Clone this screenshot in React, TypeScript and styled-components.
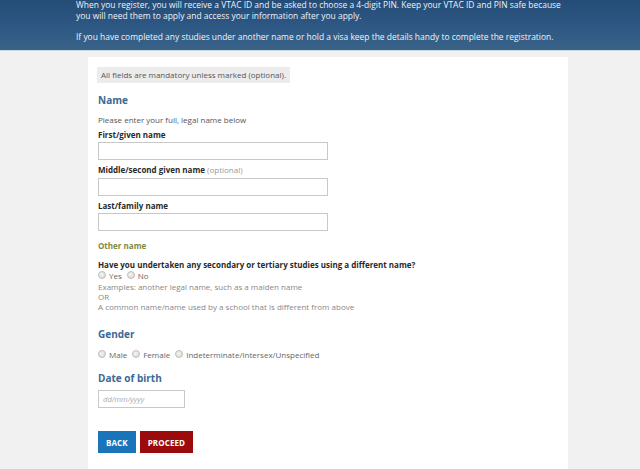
import React from 'react'
import styled, { createGlobalStyle } from 'styled-components'

const GlobalStyle = createGlobalStyle`
    html, body {
        margin: 0;
        padding: 0;
        background: #f1f1f1;
        font-family: 'Open Sans', 'DejaVu Sans', sans-serif;
        color: #333;
    }
`

const Banner = styled.div`
    height: 51px;
    box-sizing: border-box;
    padding: 0 76px;
    background: linear-gradient(180deg, #244c77 0%, #2f5a85 60%, #3a6288 100%);
    border-bottom: 1px solid #c9dbe6;
    color: #eef3f8;
    font-size: 8.45px;
    line-height: 10.5px;
    overflow: hidden;

    p {
        margin: 0 0 11px;
    }
`

const Page = styled.div`
    padding-top: 6px;
    padding-left: 88px;
`

const Panel = styled.div`
    width: 480px;
    min-height: 420px;
    box-sizing: border-box;
    background: #fff;
    padding: 10px 10px 20px;
`

const Notice = styled.div`
    width: fit-content;
    margin-left: -1px;
    height: 16px;
    line-height: 16px;
    padding: 0 4px;
    background: #ececec;
    color: #555;
    font-size: 8px;
`

const SectionTitle = styled.h2<{ $gap: number }>`
    margin: ${p => p.$gap}px 0 0;
    font-size: 10px;
    line-height: 14px;
    font-weight: 700;
    color: #3c6994;
`

const SubTitle = styled.h3`
    margin: 8.5px 0 0;
    font-size: 8px;
    line-height: 11px;
    font-weight: 700;
    color: #7b8a45;
`

const Hint = styled.div<{ $gap?: number }>`
    margin-top: ${p => p.$gap ?? 0}px;
    font-size: 8px;
    line-height: 10px;
    color: #888;
`

const Lead = styled(Hint)`
    color: #555;
    line-height: 11px;
`

const Label = styled.label<{ $gap: number }>`
    display: block;
    margin-top: ${p => p.$gap}px;
    font-size: 8px;
    line-height: 11px;
    font-weight: 700;
    color: #2a2a2a;

    span {
        font-weight: 400;
        color: #999;
    }
`

const TextBox = styled.input<{ $width: number; $gap?: number }>`
    display: block;
    box-sizing: border-box;
    width: ${p => p.$width}px;
    height: 18px;
    margin: ${p => p.$gap ?? 2.5}px 0 0;
    border: 1px solid #c8c8c8;
    background: #fff;
    font-family: inherit;
    font-size: 7.6px;
    padding: 0 4px;

    &::placeholder {
        color: #aaa;
        font-style: italic;
    }
`

const RadioRow = styled.div<{ $gap: number }>`
    display: flex;
    align-items: center;
    gap: 5px;
    margin-top: ${p => p.$gap}px;
    height: 11px;
    font-size: 8px;
    color: #666;
`

const Option = styled.label`
    display: flex;
    align-items: center;
    gap: 3px;
`

const Dot = styled.span`
    width: 8px;
    height: 8px;
    box-sizing: border-box;
    border-radius: 50%;
    border: 1px solid #bdbdbd;
    background: radial-gradient(circle at 40% 40%, #f4f4f4, #d6d6d6);
`

const Actions = styled.div`
    display: flex;
    gap: 4px;
    margin-top: 23px;
`

const Button = styled.button<{ $tone: 'blue' | 'red' }>`
    height: 22px;
    padding: 0 8px;
    border: 0;
    background: ${p => (p.$tone === 'blue' ? '#1a74b9' : '#9c0b0b')};
    color: #fff;
    font-family: inherit;
    font-size: 8px;
    font-weight: 700;
    letter-spacing: 0.1px;
`

const Radios = ({ gap, items }: { gap: number; items: string[] }) => (
    <RadioRow $gap={gap}>
        {items.map(item => (
            <Option key={item}>
                <Dot />
                {item}
            </Option>
        ))}
    </RadioRow>
)

export default function App() {
    return (
        <>
            <GlobalStyle />
            <Banner>
                <p>
                    When you register, you will receive a VTAC ID and be asked to choose a 4-digit PIN. Keep your
                    VTAC ID and PIN safe because you will need them to apply and access your information after you
                    apply.
                </p>
                <p>
                    If you have completed any studies under another name or hold a visa keep the details handy to
                    complete the registration.
                </p>
            </Banner>
            <Page>
                <Panel>
                    <Notice>All fields are mandatory unless marked (optional).</Notice>

                    <SectionTitle $gap={10}>Name</SectionTitle>
                    <Lead $gap={7}>Please enter your full, legal name below</Lead>

                    <Label $gap={3.5}>First/given name</Label>
                    <TextBox $width={230} $gap={2} />

                    <Label $gap={4.5}>
                        Middle/second given name <span>(optional)</span>
                    </Label>
                    <TextBox $width={230} />

                    <Label $gap={4}>Last/family name</Label>
                    <TextBox $width={230} />

                    <SubTitle>Other name</SubTitle>
                    <Label $gap={8}>Have you undertaken any secondary or tertiary studies using a different name?</Label>
                    <Radios gap={0} items={['Yes', 'No']} />
                    <Hint $gap={1.5}>Examples: another legal name, such as a maiden name</Hint>
                    <Hint>OR</Hint>
                    <Hint>A common name/name used by a school that is different from above</Hint>

                    <SectionTitle $gap={15}>Gender</SectionTitle>
                    <Radios gap={7.5} items={['Male', 'Female', 'Indeterminate/Intersex/Unspecified']} />

                    <SectionTitle $gap={11}>Date of birth</SectionTitle>
                    <TextBox $width={87} $gap={5.5} placeholder="dd/mm/yyyy" />

                    <Actions>
                        <Button $tone="blue">BACK</Button>
                        <Button $tone="red">PROCEED</Button>
                    </Actions>
                </Panel>
            </Page>
        </>
    )
}
